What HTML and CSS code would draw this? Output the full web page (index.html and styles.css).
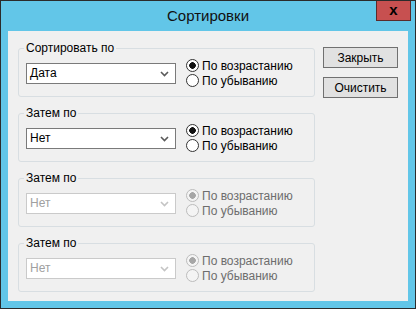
FILE: index.html
```html
<!doctype html>
<html>
  <head>
    <meta charset="utf8">
    <title>Сортировки</title>
    <link rel="stylesheet" href="styles.css">
  </head>
  <body>
    <div class="window">
      <header class="titlebar">
        <span></span>
        <h1>Сортировки</h1>
        <button class="close" title="Закрыть">x</button>
      </header>
      <main class="client">
        <div class="groups">
          <fieldset class="group">
            <legend>Сортировать по</legend>
            <div class="row">
              <div class="combo"><span>Дата</span>
                <svg width="9" height="6" viewBox="0 0 9 6"><polyline points="1,1 4.5,4.5 8,1" fill="none" stroke="#5a5a5a" stroke-width="1.6"/></svg>
              </div>
              <div class="radios">
                <label><input type="radio" name="o1" checked> По возрастанию</label>
                <label><input type="radio" name="o1"> По убыванию</label>
              </div>
            </div>
          </fieldset>
          <fieldset class="group">
            <legend>Затем по</legend>
            <div class="row">
              <div class="combo"><span>Нет</span>
                <svg width="9" height="6" viewBox="0 0 9 6"><polyline points="1,1 4.5,4.5 8,1" fill="none" stroke="#5a5a5a" stroke-width="1.6"/></svg>
              </div>
              <div class="radios">
                <label><input type="radio" name="o2" checked> По возрастанию</label>
                <label><input type="radio" name="o2"> По убыванию</label>
              </div>
            </div>
          </fieldset>
          <fieldset class="group off">
            <legend>Затем по</legend>
            <div class="row">
              <div class="combo"><span>Нет</span>
                <svg width="9" height="6" viewBox="0 0 9 6"><polyline points="1,1 4.5,4.5 8,1" fill="none" stroke="#c4c4c4" stroke-width="1.6"/></svg>
              </div>
              <div class="radios">
                <label><input type="radio" name="o3" checked disabled> По возрастанию</label>
                <label><input type="radio" name="o3" disabled> По убыванию</label>
              </div>
            </div>
          </fieldset>
          <fieldset class="group off">
            <legend>Затем по</legend>
            <div class="row">
              <div class="combo"><span>Нет</span>
                <svg width="9" height="6" viewBox="0 0 9 6"><polyline points="1,1 4.5,4.5 8,1" fill="none" stroke="#c4c4c4" stroke-width="1.6"/></svg>
              </div>
              <div class="radios">
                <label><input type="radio" name="o4" checked disabled> По возрастанию</label>
                <label><input type="radio" name="o4" disabled> По убыванию</label>
              </div>
            </div>
          </fieldset>
        </div>
        <div class="buttons">
          <button class="btn">Закрыть</button>
          <button class="btn">Очистить</button>
        </div>
      </main>
    </div>
  </body>
</html>
```

FILE: styles.css
```css
html, body { margin: 0; padding: 0; background: #62c6e8; font-family: "Liberation Sans", Arial, sans-serif; font-size: 12px; color: #000; }
.window { width: 416px; height: 309px; box-sizing: border-box; border: 1px solid #2b2b2b; background: #62c6e8; }
.titlebar { height: 30px; display: grid; grid-template-columns: 1fr auto 1fr; align-items: start; }
.titlebar h1 { margin: 0; font-weight: normal; font-size: 15px; line-height: 30px; color: #111; }
.close { justify-self: end; margin-right: 4px; width: 35px; height: 20px; padding: 0 0 2px; border: 1px solid #5b2b2b; border-top: 0; background: #c75050; color: #000; font: bold 15px/16px "Liberation Sans", Arial, sans-serif; }
.client { margin-left: 7px; width: 400px; height: 270px; box-sizing: border-box; background: #f0f0f0; padding: 10px 0 0 10px; display: flex; gap: 8px; }
.groups { display: flex; flex-direction: column; gap: 9px; width: 297px; }
.group { margin: 0; padding: 3px 7px 8px; border: 1px solid #d8dee2; border-radius: 3px; min-width: 0; }
.group legend { padding: 0 2px; margin-left: -2px; line-height: 14px; }
.row { display: flex; align-items: center; gap: 10px; height: 30px; }
.combo { width: 150px; height: 21px; box-sizing: border-box; border: 1px solid #7a7a7a; background: #fff; display: flex; align-items: center; justify-content: space-between; padding: 0 6px 0 3px; }
.combo svg { margin-top: 1px; }
.radios { display: flex; flex-direction: column; }
.radios label { display: flex; align-items: center; height: 15px; }
.radios input { -webkit-appearance: none; appearance: none; width: 13px; height: 13px; margin: 0 3px 0 0; border: 1px solid #333; border-radius: 50%; background: #fff; }
.radios input:checked { background: radial-gradient(circle, #111 0 3px, #fff 3.6px); }
.off .combo { border-color: #cacaca; color: #a0a0a0; }
.off .radios label { color: #6d6d6d; }
.off .radios input { border-color: #bcbcbc; background: #f4f4f4; }
.off .radios input:checked { background: radial-gradient(circle, #a6a6a6 0 3px, #f4f4f4 3.6px); }
.buttons { display: flex; flex-direction: column; gap: 9px; margin-top: 6px; }
.btn { width: 75px; height: 21px; padding: 0; border: 1px solid #707070; background: #e1e1e1; font: 12px "Liberation Sans", Arial, sans-serif; color: #000; }
```
